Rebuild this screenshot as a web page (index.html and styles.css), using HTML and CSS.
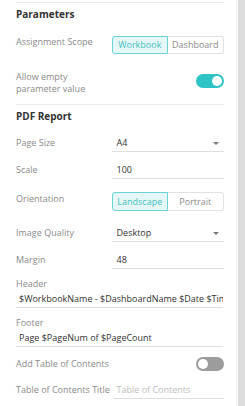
FILE: index.html
```html
<!DOCTYPE html>
<html lang="en">
<head>
  <meta charset="UTF-8" />
  <title>PDF Report Settings</title>
  <link rel="stylesheet" href="styles.css">
</head>
<body>
  <div class="frame">
    <div class="panel">
      <!-- Parameters -->
      <section class="group">
        <div class="title">Parameters</div>
        <div class="row scope-row">
          <div class="label">Assignment Scope</div>
          <div class="segmented">
            <span class="seg active">Workbook</span>
            <span class="seg">Dashboard</span>
          </div>
        </div>
        <div class="row allow-row">
          <div class="label">Allow empty<br>parameter value</div>
          <span class="toggle on"></span>
        </div>
      </section>

      <!-- PDF Report -->
      <section class="group">
        <div class="title">PDF Report</div>
        <div class="row field-row first">
          <div class="label">Page Size</div>
          <div class="field select">A4</div>
        </div>
        <div class="row field-row">
          <div class="label">Scale</div>
          <div class="field">100</div>
        </div>
        <div class="row orient-row">
          <div class="label">Orientation</div>
          <div class="segmented">
            <span class="seg active">Landscape</span>
            <span class="seg">Portrait</span>
          </div>
        </div>
        <div class="row field-row quality">
          <div class="label">Image Quality</div>
          <div class="field select">Desktop</div>
        </div>
        <div class="row field-row">
          <div class="label">Margin</div>
          <div class="field">48</div>
        </div>
        <div class="stack">
          <div class="label">Header</div>
          <div class="field wide">$WorkbookName - $DashboardName $Date $Time</div>
        </div>
        <div class="stack">
          <div class="label">Footer</div>
          <div class="field wide">Page $PageNum of $PageCount</div>
        </div>
        <div class="row toc-row">
          <div class="label">Add Table of Contents</div>
          <span class="toggle"></span>
        </div>
        <div class="row field-row toc-title">
          <div class="label">Table of Contents Title</div>
          <div class="field placeholder">Table of Contents</div>
        </div>
      </section>
    </div>
    <div class="scrollbar"></div>
  </div>
</body>
</html>
```

FILE: styles.css
```css
body {
  margin: 0;
  padding: 0;
  background-color: #fff;
  font-family: 'Open Sans', sans-serif;
  font-size: 9px;
  color: #333;
}

.frame {
  display: flex;
  height: 406px;
  overflow: hidden;
}

.panel {
  width: 223px;
  padding: 0 12px 0 16px;
  border-right: 1px solid #ececec;
}

.scrollbar {
  width: 8px;
  margin-left: 1px;
  background-color: #dcdcdc;
}

.group {
  border-top: 1px solid #ececec;
}

.group:first-child {
  margin-top: 2px;
  padding-bottom: 9px;
}

.title {
  height: 22px;
  line-height: 22px;
  font-size: 10px;
  font-weight: bold;
  color: #333;
}

.row {
  display: flex;
  justify-content: space-between;
  align-items: flex-start;
}

.label {
  color: #8a8a8a;
  line-height: 12px;
  white-space: nowrap;
}

.scope-row {
  margin-top: 11px;
}

.allow-row {
  margin-top: 17px;
}

.allow-row .toggle {
  margin-top: 3px;
}

.segmented {
  display: flex;
  width: 112px;
}

.seg {
  flex: 1;
  height: 16px;
  line-height: 16px;
  text-align: center;
  border: 1px solid #e2e2e2;
  color: #8a8a8a;
}

.seg:first-child {
  border-radius: 3px 0 0 3px;
}

.seg:last-child {
  border-left: none;
  border-radius: 0 3px 3px 0;
}

.seg.active {
  background-color: #e6f7f7;
  border-color: #6ad3d3;
  color: #45c0c0;
}

.orient-row {
  margin-top: 13px;
}

.orient-row .seg {
  height: 17px;
  line-height: 17px;
}

.orient-row .label {
  margin-top: 1px;
}

.toggle {
  position: relative;
  width: 28px;
  height: 14px;
  border-radius: 7px;
  background-color: #9c9c9c;
}

.toggle::after {
  content: "";
  position: absolute;
  top: 2px;
  left: 2px;
  width: 10px;
  height: 10px;
  border-radius: 50%;
  background-color: #fff;
}

.toggle.on {
  background-color: #2ec4c6;
}

.toggle.on::after {
  left: 16px;
}

.field-row {
  margin-top: 10px;
}

.field-row.first {
  margin-top: 8px;
}

.field-row.quality {
  margin-top: 14px;
}

.field-row .label {
  line-height: 16px;
}

.field {
  position: relative;
  width: 107px;
  padding-left: 5px;
  height: 16px;
  line-height: 16px;
  border-bottom: 1px solid #dedede;
  color: #333;
  white-space: nowrap;
  overflow: hidden;
}

.field.select::after {
  content: "";
  position: absolute;
  right: 5px;
  top: 7px;
  border-left: 3px solid transparent;
  border-right: 3px solid transparent;
  border-top: 3px solid #777;
}

.stack {
  margin-top: 9px;
}

.field.wide {
  width: 204px;
  padding-left: 3px;
  margin-top: 1px;
}

.toc-row {
  margin-top: 10px;
}

.toc-row .label {
  line-height: 14px;
}

.toc-title {
  margin-top: 11px;
}

.field.placeholder {
  padding-left: 4px;
  color: #bdbdbd;
}
```
